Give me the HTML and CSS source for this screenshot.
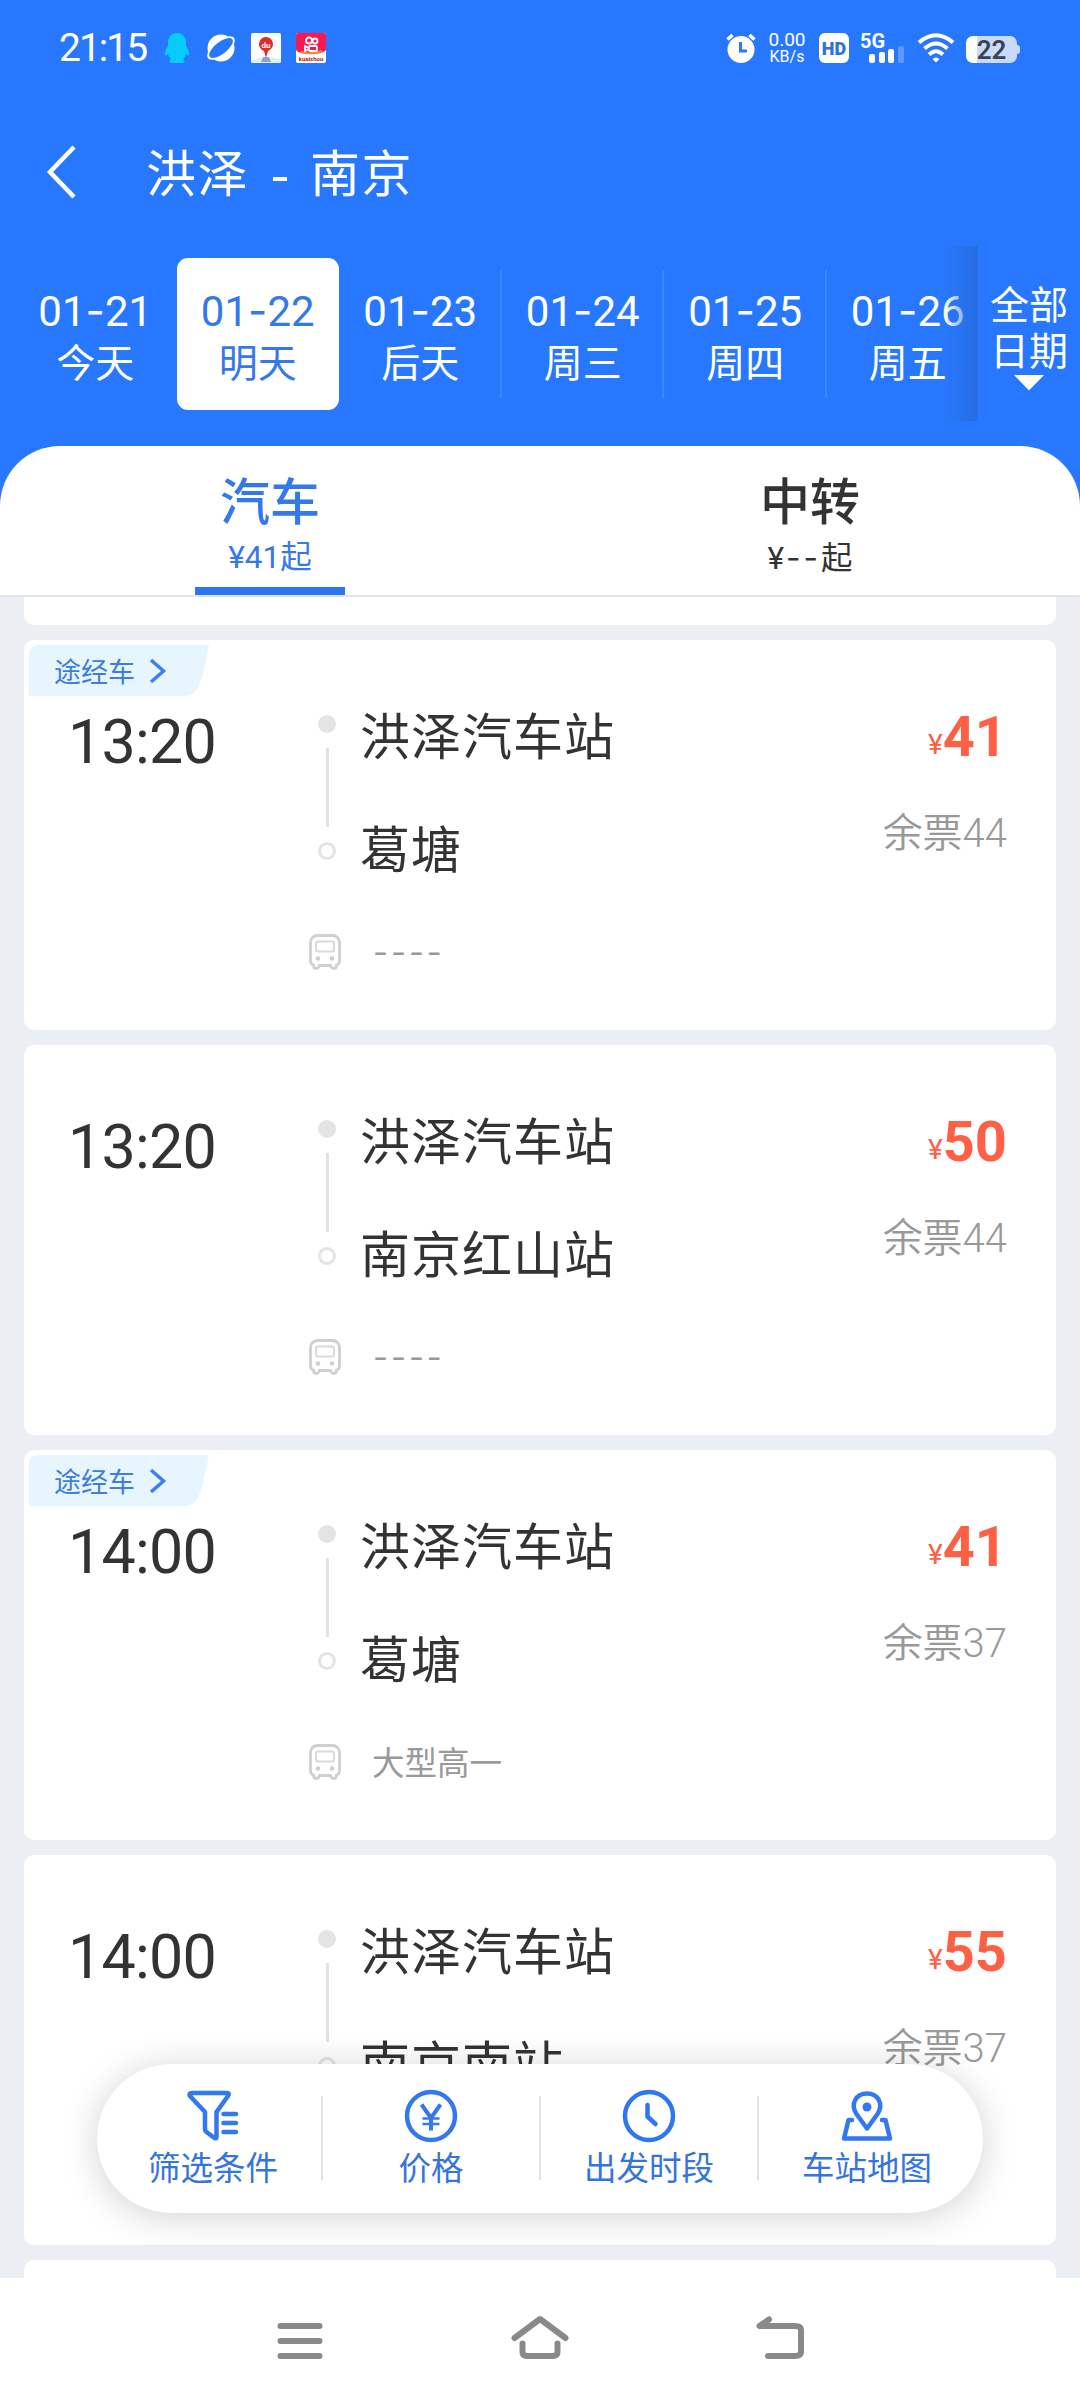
FILE: index.html
```
<!DOCTYPE html>
<html lang="zh-CN">
<head>
  <meta charset="UTF-8" />
  <meta name="viewport" content="width=device-width, initial-scale=1" />
  <title>洪泽 - 南京</title>
  <link rel="stylesheet" href="styles.css">
</head>
<body>
  <svg class="symbols" width="0" height="0">
    <symbol id="icon-bus" viewBox="0 0 32 36">
      <path d="M8.500 1.500h15a7 7 0 0 1 7 7v18c0 2.500-1 4-3 4.500 0 2.500-1 3.500-2.500 3.500s-3-1-3.500-3h-11c-.5 2-2 3-3.500 3S4.500 33.500 4.500 31C2.500 30.500 1.500 29 1.500 26.500V8.500a7 7 0 0 1 7-7z" fill="none" stroke="#d0d0d0" stroke-width="2.800"/>
      <rect x="7" y="7.500" width="18" height="10" rx="2" fill="none" stroke="#dadada" stroke-width="2"/>
      <circle cx="9" cy="24.500" r="2.300" fill="#cfcfcf"/>
      <circle cx="23" cy="24.500" r="2.300" fill="#cfcfcf"/>
    </symbol>
  </svg>

  <div class="screen">
    <header class="top">
      <div class="status">
        <span class="clock">21:15</span>
        <svg class="s-qq" width="26" height="32" viewBox="0 0 26 32"><path d="M13 1c6 0 9 4.500 9 10v3c2 3 3.500 6 3 9-.5 1.500-2 0-3-1.500-.5 3-1.500 4.500-3 6 2 1.500 2 3.500 0 3.500H7c-2 0-2-2 0-3.500-1.500-1.500-2.500-3-3-6C3 23 1.500 24.500 1 23c-.5-3 1-6 3-9v-3C4 5.500 7 1 13 1z" fill="#04cdfb"/></svg>
        <svg class="s-planet" width="30" height="30" viewBox="0 0 30 30"><ellipse cx="15" cy="15" rx="16.500" ry="7.500" transform="rotate(-38 15 15)" fill="#fff"/><circle cx="15" cy="15" r="13.500" fill="#fff"/><ellipse cx="15" cy="15" rx="14.300" ry="6" transform="rotate(-38 15 15)" fill="#2878ff"/></svg>
        <svg class="s-app" width="30" height="30" viewBox="0 0 30 30"><rect width="30" height="30" rx="2" fill="#fff"/><path d="M0 27q15-5 30-1v2q0 2-2 2H2q-2 0-2-2z" fill="#e3f0e2"/><path d="M12 24h6l2 5H10z" fill="#8aa3dc"/><path d="M15 25l-2-7C9 16 8 13.500 8 11a7 7 0 0 1 14 0c0 2.500-1 5-5 7z" fill="#de2b2b"/><text x="15" y="14.500" text-anchor="middle" class="du">du</text></svg>
        <svg class="s-app" width="30" height="30" viewBox="0 0 30 30"><rect width="30" height="30" rx="2" fill="#fff"/><path d="M2 0h26q2 0 2 2v15q-3 4-15 4T0 17V2q0-2 2-2z" fill="#f9184f"/><path d="M5 19q10 3 21-1" stroke="#ff8a2b" stroke-width="2" fill="none"/><g fill="none" stroke="#fff" stroke-width="1.800"><circle cx="13" cy="7.500" r="3"/><circle cx="19" cy="8" r="2.500"/><rect x="13" y="13" width="8" height="5" rx="1"/><path d="M13 15l-4-2v5l4-2"/></g><text x="15" y="27.500" text-anchor="middle" class="ks">kuaishou</text></svg>

        <svg class="s-alarm" width="30" height="30" viewBox="0 0 30 30"><circle cx="15" cy="16.500" r="13.500" fill="#fff"/><path d="M1.500 6.500l5-4.500M28.500 6.500l-5-4.500" stroke="#fff" stroke-width="3.500"/><path d="M14.500 9v9h6.500" fill="none" stroke="#2878ff" stroke-width="3"/></svg>
        <span class="speed"><span class="rate">0.00</span><span class="unit">KB/s</span></span>
        <span class="hd">HD</span>
        <svg class="s-signal" width="46" height="32" viewBox="0 0 46 32"><text x="0" y="15.500" class="g5">5G</text><g fill="#fff"><rect x="9" y="22" width="6" height="9" rx="2"/><rect x="19" y="20" width="6" height="11" rx="2"/><rect x="28" y="17" width="6" height="14" rx="2"/><rect x="38" y="14" width="6" height="17" rx="2" opacity=".25"/></g></svg>
        <svg class="s-wifi" width="38" height="30" viewBox="0 0 38 30"><g fill="none" stroke="#fff" stroke-width="4"><path d="M2 9.500Q19-5 36 9.500"/><path d="M7.500 15.500Q19 5.500 30.500 15.500"/><path d="M12 21.500Q19 15 26 21.500"/></g><path d="M15.500 26q3.500-3 7 0L19 29.500z" fill="#fff"/></svg>
        <span class="battery">22</span>
      </div>

      <div class="title">
        <svg width="32" height="56" viewBox="0 0 32 56"><path d="M28 3L4 28l24 25" fill="none" stroke="#fff" stroke-width="4.500"/></svg>
        <h1><span>洪泽</span><i></i><span>南京</span></h1>
      </div>

      <div class="dates">
        <div class="days">
          <div class="day"><b>01<em>-</em>21</b><span>今天</span></div>
          <div class="day active"><b>01<em>-</em>22</b><span>明天</span></div>
          <div class="day line"><b>01<em>-</em>23</b><span>后天</span></div>
          <div class="day line"><b>01<em>-</em>24</b><span>周三</span></div>
          <div class="day line"><b>01<em>-</em>25</b><span>周四</span></div>
          <div class="day"><b>01<em>-</em>26</b><span>周五</span></div>
        </div>
        <div class="all">
          <span>全部</span>
          <span>日期</span>
          <svg width="30" height="16" viewBox="0 0 30 16"><path d="M0 0h30L15 15.500z" fill="#fff"/></svg>
        </div>
      </div>

      <div class="tabs">
        <div class="tab active"><span class="name">汽车</span><span class="from">¥41起</span></div>
        <div class="tab"><span class="name">中转</span><span class="from">¥<em>--</em>起</span></div>
      </div>
    </header>

    <main class="list">
      <div class="card previous"></div>

      <div class="card">
        <div class="tag"><span>途经车</span><svg width="18" height="26" viewBox="0 0 18 26"><path d="M2 2l12.500 11L2 24" fill="none" stroke="#3b80ee" stroke-width="3.500"/></svg></div>
        <div class="trip">
          <div class="time">13:20</div>
          <div class="rail"><i class="dot"></i><i class="bar"></i><i class="ring"></i></div>
          <div class="stations"><span>洪泽汽车站</span><span>葛塘</span></div>
          <div class="fare"><span class="price"><small>¥</small>41</span><span class="left">余票44</span></div>
        </div>
        <div class="bus"><svg width="32" height="36"><use href="#icon-bus"/></svg><span class="none">----</span></div>
      </div>

      <div class="card">
        <div class="trip">
          <div class="time">13:20</div>
          <div class="rail"><i class="dot"></i><i class="bar"></i><i class="ring"></i></div>
          <div class="stations"><span>洪泽汽车站</span><span>南京红山站</span></div>
          <div class="fare"><span class="price"><small>¥</small>50</span><span class="left">余票44</span></div>
        </div>
        <div class="bus"><svg width="32" height="36"><use href="#icon-bus"/></svg><span class="none">----</span></div>
      </div>

      <div class="card">
        <div class="tag"><span>途经车</span><svg width="18" height="26" viewBox="0 0 18 26"><path d="M2 2l12.500 11L2 24" fill="none" stroke="#3b80ee" stroke-width="3.500"/></svg></div>
        <div class="trip">
          <div class="time">14:00</div>
          <div class="rail"><i class="dot"></i><i class="bar"></i><i class="ring"></i></div>
          <div class="stations"><span>洪泽汽车站</span><span>葛塘</span></div>
          <div class="fare"><span class="price"><small>¥</small>41</span><span class="left">余票37</span></div>
        </div>
        <div class="bus"><svg width="32" height="36"><use href="#icon-bus"/></svg><span class="model">大型高一</span></div>
      </div>

      <div class="card">
        <div class="trip">
          <div class="time">14:00</div>
          <div class="rail"><i class="dot"></i><i class="bar"></i><i class="ring"></i></div>
          <div class="stations"><span>洪泽汽车站</span><span>南京南站</span></div>
          <div class="fare"><span class="price"><small>¥</small>55</span><span class="left">余票37</span></div>
        </div>
      </div>

      <div class="card"></div>
    </main>

    <div class="filter">
      <div class="item">
        <svg width="54" height="54" viewBox="0 0 54 54"><g fill="none" stroke="#3478f0" stroke-width="4.500" stroke-linecap="round" stroke-linejoin="round"><path d="M6 4h35q3 0 1 3L30.500 23v25q0 2-2 1l-8-6q-1.500-1-1.500-3V23L4 7Q2.500 4 6 4z"/><path d="M37.500 25H50M37.500 34H50M37.500 43H50"/></g></svg>
        <span>筛选条件</span>
      </div>
      <div class="item">
        <svg width="54" height="54" viewBox="0 0 54 54"><g fill="none" stroke="#3478f0" stroke-width="4.500"><circle cx="27" cy="27" r="24"/><path d="M17.500 15.500L27 29l9.500-13.500M27 28v13.500" stroke-width="4"/><path d="M18.500 29.500h17M18.500 35h17" stroke-width="2.500"/></g></svg>
        <span>价格</span>
      </div>
      <div class="item">
        <svg width="54" height="54" viewBox="0 0 54 54"><g fill="none" stroke="#2f76f2" stroke-width="4.500"><circle cx="27" cy="27" r="24"/><path d="M25.500 16v11.500l8 7.500" stroke-linecap="round" stroke-linejoin="round"/></g></svg>
        <span>出发时段</span>
      </div>
      <div class="item">
        <svg width="54" height="54" viewBox="0 0 54 54"><g fill="none" stroke="#3478f0" stroke-width="4.500" stroke-linecap="round" stroke-linejoin="round"><path d="M27 39.500L16.500 25C10 15 16 4.500 27 4.500S44 15 37.500 25z"/><path d="M12 31H8.500L4 49.500h46L45.500 31H42"/></g><circle cx="27" cy="18" r="4.500" fill="#3478f0"/></svg>
        <span>车站地图</span>
      </div>
    </div>

    <nav class="keys">
      <svg width="60" height="50" viewBox="0 0 60 50"><path d="M10.500 12h39M10.500 27h39M10.500 42h39"/></svg>
      <svg width="60" height="50" viewBox="0 0 60 50"><path d="M4.500 24L30 5l25.500 19M12.500 29.500V38q0 4 4.500 4h26q4.500 0 4.500-4v-8.500"/></svg>
      <svg width="60" height="50" viewBox="0 0 60 50"><path d="M19 5.500L9.500 12H45q6 0 6 4v22q0 4-6 4H18"/></svg>
    </nav>
  </div>
</body>
</html>
```
FILE: styles.css
```
* {
  box-sizing: border-box;
}
body {
  margin: 0;
  font-family: Roboto, "Noto Sans CJK SC", sans-serif;
  color: #333;
  background: #ebeff4;
}
i, em {
  font-style: normal;
}
/* wider hyphens than Roboto has */
em, .none {
  font-family: Inter, sans-serif;
}
svg {
  display: block;
  flex: none;
  overflow: visible;
}
.symbols {
  position: absolute;
}
.screen {
  position: relative;
  display: flex;
  flex-direction: column;
  width: 1080px;
  height: 2404px;
  overflow: hidden;
}

/* header */
.top {
  flex: none;
  height: 597px;
  background: #2878ff;
  color: #fff;
}
.status {
  display: flex;
  align-items: center;
  height: 96px;
  padding: 0 60px 0 59px;
}
.clock {
  width: 105px;
  font-size: 39px;
  letter-spacing: -2px;
}
.s-planet {
  margin-left: 16px;
}
.s-app {
  margin-left: 15px;
}
.s-alarm {
  margin-left: auto;
}
.du {
  font-size: 8px;
  font-weight: bold;
  fill: #fff;
}
.ks {
  font-size: 6px;
  font-weight: bold;
  fill: #b3122c;
}
.speed {
  display: flex;
  flex-direction: column;
  width: 40px;
  margin-left: 11px;
  text-align: center;
}
.rate {
  font-size: 19px;
  line-height: 17px;
}
.unit {
  font-size: 16px;
  line-height: 17px;
}
.hd {
  width: 30px;
  height: 30px;
  margin-left: 12px;
  border-radius: 6px;
  background: #fff;
  color: #2f71d8;
  font-size: 18px;
  font-weight: 900;
  line-height: 31px;
  text-align: center;
}
.s-signal {
  margin-left: 11px;
}
.g5 {
  font-size: 20px;
  font-weight: bold;
  fill: #fff;
}
.s-wifi {
  margin-left: 11px;
}
.battery {
  position: relative;
  width: 51px;
  height: 27px;
  margin: 3px 3px 0 11px;
  border-radius: 7px;
  background: linear-gradient(90deg, #fff 11px, #cbdafb 11px);
  color: #3a4250;
  font-size: 26px;
  font-weight: 600;
  line-height: 28px;
  text-align: center;
}
.battery::after {
  content: "";
  position: absolute;
  right: -3px;
  top: 9px;
  width: 3px;
  height: 9px;
  border-radius: 0 3px 3px 0;
  background: #cbdafb;
}
.title {
  display: flex;
  align-items: center;
  height: 150px;
  padding: 2px 0 0 46px;
}
.title h1 {
  display: flex;
  align-items: center;
  margin: 5px 0 0 68px;
  font-size: 50px;
  font-weight: 400;
  letter-spacing: 1.500px;
  line-height: 60px;
}
.title i {
  width: 14px;
  height: 4px;
  margin: 8px 23px 0 24px;
  background: #fff;
}
.dates {
  display: flex;
  height: 175px;
}
.days {
  position: relative;
  display: flex;
  width: 978px;
  padding: 12px 0 0 14px;
  overflow: hidden;
}
.days::after {
  content: "";
  position: absolute;
  right: 0;
  top: 0;
  width: 34px;
  height: 175px;
  background: linear-gradient(90deg, rgba(38, 110, 228, 0), rgba(38, 108, 222, .9));
}
.day {
  position: relative;
  display: flex;
  flex: none;
  flex-direction: column;
  align-items: center;
  width: 162.500px;
  height: 152px;
  padding-top: 29px;
}
.day b {
  font-size: 42px;
  font-weight: 400;
  line-height: 48px;
}
.day span {
  font-size: 39px;
  line-height: 56px;
}
.day.active {
  border-radius: 11px;
  background: #fff;
  color: #3478ea;
}
.line::after {
  content: "";
  position: absolute;
  right: 0;
  top: 12px;
  width: 2px;
  height: 128px;
  background: #3d86ff;
}
.all {
  display: flex;
  flex-direction: column;
  align-items: center;
  width: 102px;
  padding-top: 37px;
  font-size: 39px;
  line-height: 46px;
}
.tabs {
  display: flex;
  height: 151px;
  margin-top: 25px;
  border-bottom: 2px solid #e2e6ea;
  border-radius: 60px 60px 0 0;
  background: #fff;
  color: #333;
}
.tab {
  display: flex;
  flex: 1;
  flex-direction: column;
  align-items: center;
  padding-top: 29px;
}
.name {
  font-size: 50px;
  font-weight: 500;
  line-height: 56px;
}
.from {
  font-size: 31.500px;
  line-height: 53px;
}
.from em {
  letter-spacing: 3px;
  padding-left: 2px;
}
.tab.active {
  color: #3478ea;
}
.tab.active::after {
  content: "";
  width: 150px;
  height: 9px;
  margin-top: 3px;
  background: #2b76f2;
}

/* list */
.list {
  flex: 1;
  min-height: 0;
  padding: 0 24px;
  overflow: hidden;
}
.card {
  position: relative;
  height: 390px;
  margin-bottom: 15px;
  padding: 70px 49px 0 42px;
  border-radius: 10px;
  background: #fff;
}
.card.previous {
  height: 28px;
  padding: 0;
  border-radius: 0 0 10px 10px;
}
.tag {
  position: absolute;
  left: 5px;
  top: 5px;
  display: flex;
  align-items: center;
  width: 180px;
  height: 51px;
  padding-left: 25px;
  clip-path: path("M10 0H180L174 28Q169 51 156 51H0V10Q0 0 10 0z");
  background: #e7f6fe;
  color: #3f7cdc;
  font-size: 27px;
}
.tag svg {
  margin-left: 14px;
}
.trip {
  display: flex;
  height: 169px;
}
.time {
  width: 243px;
  padding-left: 2px;
  font-size: 61px;
  letter-spacing: -.8px;
  line-height: 64px;
}
.rail {
  display: flex;
  flex-direction: column;
  align-items: center;
  width: 36px;
  padding-top: 5px;
}
.dot, .ring {
  width: 18px;
  height: 18px;
  border-radius: 50%;
}
.dot {
  background: #e4e4e4;
}
.ring {
  border: 3px solid #e4e4e4;
}
.bar {
  width: 3px;
  height: 79px;
  margin: 15px 0;
  background: #e2e2e2;
}
.stations {
  display: flex;
  flex: 1;
  flex-direction: column;
  gap: 57px;
  padding-left: 15px;
  font-size: 50px;
  letter-spacing: 1px;
  line-height: 56px;
}
.fare {
  display: flex;
  flex-direction: column;
  align-items: flex-end;
}
.price {
  color: #fe6045;
  font-size: 56px;
  font-weight: bold;
  line-height: 54px;
}
.price small {
  font-size: 28px;
  font-weight: 400;
  vertical-align: 2px;
}
.left {
  margin-top: 36px;
  color: #999;
  font-size: 40px;
  font-weight: 350;
  line-height: 52px;
}
.bus {
  display: flex;
  align-items: center;
  height: 40px;
  margin-top: 53px;
  padding-left: 243px;
  color: #999;
  font-size: 32.500px;
}
.model {
  margin-left: 31px;
  padding-bottom: 4px;
}
.none {
  margin-left: 32px;
  letter-spacing: 3px;
}

/* floating filter bar */
.filter {
  position: absolute;
  left: 97px;
  top: 2064px;
  display: flex;
  width: 886px;
  height: 149px;
  padding: 0 7px;
  border-radius: 75px;
  background: #fff;
  box-shadow: 0 4px 36px rgba(0, 0, 0, .18);
}
.item {
  position: relative;
  display: flex;
  flex: 1;
  flex-direction: column;
  align-items: center;
  padding-top: 25px;
  color: #3474dc;
  font-size: 32.500px;
  line-height: 52px;
}
.item + .item::before {
  content: "";
  position: absolute;
  left: -1px;
  top: 32px;
  width: 2px;
  height: 84px;
  background: #e2e2e2;
}

/* system keys */
.keys {
  display: flex;
  flex: none;
  gap: 180px;
  height: 126px;
  padding: 36px 0 0 270px;
  background: #fff;
}
.keys path {
  fill: none;
  stroke: #898989;
  stroke-width: 6;
  stroke-linecap: round;
  stroke-linejoin: round;
}
```
